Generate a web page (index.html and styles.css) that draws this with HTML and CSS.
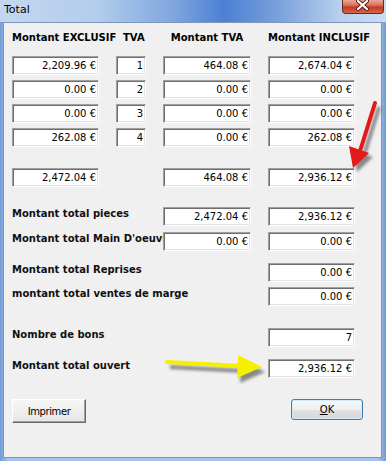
FILE: index.html
```html
<!DOCTYPE html>
<html lang="fr">
<head>
  <meta charset="UTF-8" />
  <title>Total</title>
  <link rel="stylesheet" href="styles.css">
</head>
<body>

  <div class="window">
    <div class="titlebar">
      <span class="title">Total</span>
      <div class="close">
        <svg width="42" height="14" viewBox="0 0 42 14">
          <path d="M16 2 L25 10 M25 2 L16 10" stroke="#5e1d14" stroke-width="4" stroke-linecap="round" />
          <path d="M16 2 L25 10 M25 2 L16 10" stroke="#fff" stroke-width="2.2" stroke-linecap="round" />
        </svg>
      </div>
    </div>

    <div class="client">
      <div class="row head">
        <span>Montant EXCLUSIF</span>
        <span class="tva">TVA</span>
        <span class="center">Montant TVA</span>
        <span>Montant INCLUSIF</span>
      </div>

      <div class="row r1">
        <div class="field c1">2,209.96 €</div>
        <div class="field c2">1</div>
        <div class="field c3">464.08 €</div>
        <div class="field c4">2,674.04 €</div>
      </div>
      <div class="row rn">
        <div class="field c1">0.00 €</div>
        <div class="field c2">2</div>
        <div class="field c3">0.00 €</div>
        <div class="field c4">0.00 €</div>
      </div>
      <div class="row rn">
        <div class="field c1">0.00 €</div>
        <div class="field c2">3</div>
        <div class="field c3">0.00 €</div>
        <div class="field c4">0.00 €</div>
      </div>
      <div class="row rn">
        <div class="field c1">262.08 €</div>
        <div class="field c2">4</div>
        <div class="field c3">0.00 €</div>
        <div class="field c4">262.08 €</div>
      </div>

      <div class="row total">
        <div class="field c1">2,472.04 €</div>
        <div class="field c3">464.08 €</div>
        <div class="field c4">2,936.12 €</div>
      </div>

      <div class="row pieces">
        <span class="label">Montant total pieces</span>
        <div class="field c3">2,472.04 €</div>
        <div class="field c4">2,936.12 €</div>
      </div>
      <div class="row main">
        <span class="label">Montant total Main D'oeuvre</span>
        <div class="field c3">0.00 €</div>
        <div class="field c4">0.00 €</div>
      </div>
      <div class="row reprises">
        <span class="label">Montant total Reprises</span>
        <div class="field c4">0.00 €</div>
      </div>
      <div class="row marge">
        <span class="label">montant total ventes de marge</span>
        <div class="field c4">0.00 €</div>
      </div>
      <div class="row bons">
        <span class="label">Nombre de bons</span>
        <div class="field c4">7</div>
      </div>
      <div class="row ouvert">
        <span class="label">Montant total ouvert</span>
        <div class="field c4">2,936.12 €</div>
      </div>

      <div class="actions">
        <button type="button" class="btn-print">Imprimer</button>
        <button type="button" class="btn-ok"><span class="u">O</span>K</button>
      </div>
    </div>

    <!-- annotation arrows drawn over the dialog -->
    <svg class="arrows" width="386" height="461" viewBox="0 0 386 461">
      <defs>
        <filter id="soft" x="-20%" y="-20%" width="140%" height="140%">
          <feGaussianBlur stdDeviation="1.6" />
        </filter>
      </defs>
      <g filter="url(#soft)" opacity="0.55" transform="translate(4 4)">
        <line x1="375" y1="103" x2="360" y2="151" stroke="#333" stroke-width="4" />
        <polygon points="353,168 369,153 349,146" fill="#333" />
      </g>
      <line x1="375" y1="103" x2="360" y2="151" stroke="#e3191b" stroke-width="4" stroke-linecap="round" />
      <polygon points="353,168 369,153 349,146" fill="#e3191b" />

      <g filter="url(#soft)" opacity="0.55" transform="translate(3 5)">
        <line x1="167" y1="362" x2="242" y2="366" stroke="#333" stroke-width="4" />
        <polygon points="262,367 238,355 237,378" fill="#333" />
      </g>
      <line x1="167" y1="362" x2="242" y2="366" stroke="#f4f000" stroke-width="4" stroke-linecap="round" />
      <polygon points="262,367 238,355 237,378" fill="#f4f000" />
    </svg>
  </div>

</body>
</html>
```

FILE: styles.css
```css
* {
  box-sizing: border-box;
}

body {
  margin: 0;
  font-family: "DejaVu Sans", sans-serif;
  font-size: 10px;
  color: #000;
  background-color: #fff;
}

.window {
  position: relative;
  width: 386px;
  height: 461px;
  display: flex;
  flex-direction: column;
  background: linear-gradient(90deg, #6f9bd6 0%, #a6c3e8 2%, #a6c3e8 98%, #6f9bd6 100%);
}

.titlebar {
  height: 22px;
  display: flex;
  align-items: flex-start;
  background: linear-gradient(90deg, #c3d7ef 0%, #b3cdec 25%, #7fa6df 45%, #4b80d3 58%, #79a1dc 72%, #b8cfee 88%, #c9dcf2 100%);
}

.title {
  padding: 3px 0 0 4px;
  font-size: 11px;
  line-height: 13px;
}

.close {
  margin-left: auto;
  margin-right: 2px;
  width: 42px;
  height: 14px;
  border: 1px solid #6b2a21;
  border-top: none;
  border-radius: 0 0 4px 4px;
  background: linear-gradient(#e9a899 0%, #d9725c 40%, #c13b24 55%, #d4654c 100%);
}

.close svg {
  display: block;
  margin: -1px 0 0 -1px;
}

.client {
  flex: 1;
  margin: 0 4px 3px 3px;
  border: 1px solid #7d96b8;
  background-color: #f0f0f0;
  padding-left: 8px;
}

.row {
  display: grid;
  grid-template-columns: 87px 30px 88px 87px;
  column-gap: 17px;
}

.head {
  margin-top: 9px;
  font-weight: bold;
  line-height: 12px;
  white-space: nowrap;
}

.head .tva {
  padding-left: 7px;
}

.head .center {
  text-align: center;
}

.field {
  height: 19px;
  padding-right: 2px;
  background-color: #fff;
  border: 1px solid;
  border-color: #a0a0a0 #fff #fff #a0a0a0;
  box-shadow: inset 1px 1px 0 #6e6e6e, inset -1px -1px 0 #e3e3e3;
  text-align: right;
  line-height: 17px;
  white-space: nowrap;
  overflow: hidden;
}

.c1 { grid-column: 1; }
.c2 { grid-column: 2; }
.c3 { grid-column: 3; }
.c4 { grid-column: 4; }

.label {
  grid-column: 1 / 3;
  grid-row: 1;
  padding-top: 1px;
  font-weight: bold;
  line-height: 12px;
  white-space: nowrap;
  color: #111;
}

.r1 { margin-top: 12px; }
.rn { margin-top: 5px; }
.total { margin-top: 21px; }
.pieces { margin-top: 20px; }
.main { margin-top: 6px; }
.reprises { margin-top: 12px; }
.marge { margin-top: 5px; }
.bons { margin-top: 22px; }
.ouvert { margin-top: 12px; }

.actions {
  display: flex;
  align-items: flex-start;
  margin-top: 21px;
  padding-right: 18px;
}

.actions button {
  font-family: inherit;
  font-size: 10px;
  color: #000;
  padding: 0;
}

.btn-print {
  width: 74px;
  height: 24px;
  border: 1px solid;
  border-color: #fff #6a6a6a #6a6a6a #fff;
  box-shadow: inset -1px -1px 0 #a0a0a0;
  background: linear-gradient(#f7f7f7, #e6e6e6);
  letter-spacing: -0.4px;
}

.btn-ok {
  margin-left: auto;
  width: 72px;
  height: 21px;
  border: 1px solid #3c7fb1;
  border-radius: 3px;
  box-shadow: inset 0 0 0 1px #d4ecfa;
  background: linear-gradient(#f8f8f8 0%, #efefef 50%, #e2e2e2 51%, #d6d6d6 100%);
}

.u {
  text-decoration: underline;
}

.arrows {
  position: absolute;
  top: 0;
  left: 0;
  pointer-events: none;
}
```
